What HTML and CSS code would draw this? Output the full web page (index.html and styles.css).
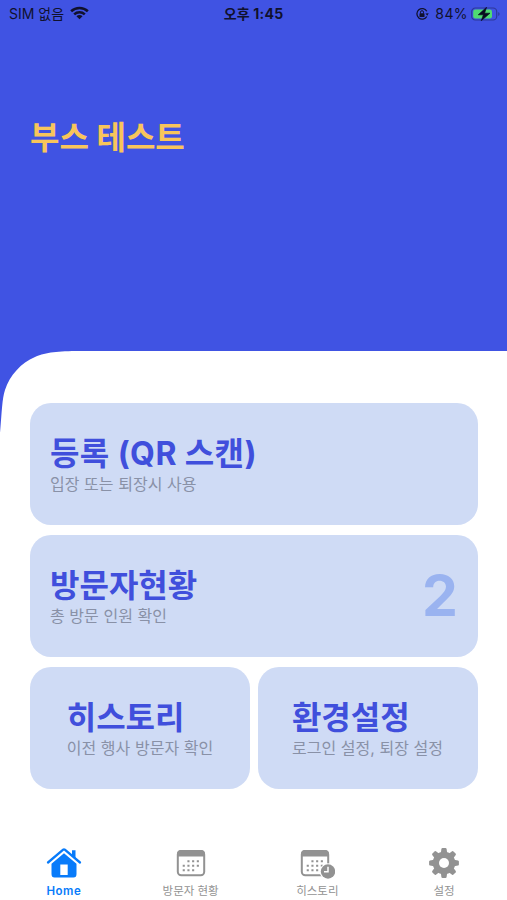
FILE: index.html
```html
<!DOCTYPE html>
<html lang="ko">
<head>
<meta charset="utf-8">
<meta name="viewport" content="width=device-width, initial-scale=1">
<title>부스 테스트</title>
<link rel="stylesheet" href="styles.css">
</head>
<body>
<div class="app">
  <header class="hero">
    <div class="status">
      <div class="status-left">
        <span class="carrier">SIM 없음</span>
        <svg class="wifi" viewBox="0 0 20 14" width="19" height="14" fill="none" stroke="#10112d" stroke-width="2.7"><path d="M1.2 5.2C6.2.5 13.8.5 18.8 5.2"/><path d="M4.4 8.5c3.2-3 8-3 11.2 0"/><path d="M10 13.6 6.8 10.5c1.8-1.7 4.6-1.7 6.4 0z" fill="#10112d" stroke="none"/></svg>
      </div>
      <span class="time">오후 1:45</span>
      <div class="status-right">
        <svg class="lock" viewBox="0 0 14 14" width="14" height="14" fill="none" stroke="#10112d"><path d="M11.8 4.2A5.3 5.3 0 1 0 11.8 9.5" stroke-width="1.3"/><path d="m10.4 6.4 3.3-.2-1.4 2.6z" fill="#10112d" stroke="none"/><rect x="4.5" y="6.3" width="5" height="3.7" rx=".6" fill="#10112d" stroke="none"/><path d="M5.5 6.5V5.2a1.5 1.5 0 0 1 3 0v1.3"/></svg>
        <span class="percent">84%</span>
        <svg class="battery" viewBox="0 0 30 14" width="30" height="14"><rect x=".7" y="1" width="25" height="12" rx="3.6" fill="none" stroke="#2d3899" stroke-width="1.2"/><path d="M27.2 5v4c1.9-.6 1.9-3.4 0-4z" fill="#2d3899"/><rect x="2.2" y="2.5" width="18.8" height="9" rx="2.2" fill="#4fda72"/><path d="M15.6.2 7.2 7.8h5.2l-2.2 6 8.8-7.6h-5.4z" fill="#090b20" stroke="#090b20" stroke-width=".6"/></svg>
      </div>
    </div>
    <h1 class="booth">부스 테스트</h1>
  </header>
  <main class="panel">
    <svg class="corner" viewBox="0 0 80 82" width="80" height="82"><path d="M0 0H80C57 .2 47 1 35 6 21 12 10 24 5 39 2 48 2 60 0 82z" fill="#4053e3"/></svg>
    <section class="card">
      <div class="copy"><h2 class="register">등록 (QR 스캔)</h2><p>입장 또는 퇴장시 사용</p></div>
    </section>
    <section class="card">
      <div class="copy"><h2>방문자현황</h2><p>총 방문 인원 확인</p></div>
      <strong class="count">2</strong>
    </section>
    <div class="pair">
      <section class="card small"><div class="copy"><h2>히스토리</h2><p>이전 행사 방문자 확인</p></div></section>
      <section class="card small settings"><div class="copy"><h2>환경설정</h2><p>로그인 설정, 퇴장 설정</p></div></section>
    </div>
  </main>
  <nav class="tabs">
    <a class="tab active">
      <svg viewBox="0 0 36 32" width="36" height="32"><path d="M2 15.5 17.2 2.7q.8-.7 1.6 0L34 15.5" fill="none" stroke="#087bfa" stroke-width="2.3" stroke-linecap="round" stroke-linejoin="round"/><path d="M26 3.2h3.5v9L26 9z" fill="#087bfa"/><path fill-rule="evenodd" d="M18 6.2 30.5 16.8V27q0 3.5-3 3.5h-19q-3 0-3-3.5V16.8zM14.3 17.5V28h7.400V17.5z" fill="#087bfa"/></svg>
      <span>Home</span>
    </a>
    <a class="tab">
      <svg viewBox="0 0 36 32" width="36" height="32"><g id="calendar"><rect x="4.8" y="4" width="26.4" height="24.3" rx="3.5" fill="none" stroke="#929292" stroke-width="2"/><path d="M4 9.500V7q0-4 4-4h20q4 0 4 4v2.500z" fill="#929292"/><g fill="none" stroke="#929292" stroke-width="2.1" stroke-dasharray="2.1 2.6"><path d="M14.4 14.200h11.8M9.700 18.700h16.500M9.700 23.200h11.800"/></g></g></svg>
      <span>방문자 현황</span>
    </a>
    <a class="tab">
      <svg viewBox="0 0 36 32" width="36" height="32"><use href="#calendar" x="-2"/><circle cx="29" cy="24.500" r="8.300" fill="#fff"/><circle cx="29" cy="24.500" r="7.200" fill="#929292"/><path d="M29 19.800v4.900h-4" fill="none" stroke="#fff" stroke-width="1.500"/></svg>
      <span>히스토리</span>
    </a>
    <a class="tab">
      <svg viewBox="0 0 36 32" width="36" height="32"><g fill="#929292" transform="translate(18 16)"><g id="teeth"><path id="tooth" d="M-3.200-10-2.600-14q.2-.9 1.100-.9h3q.9 0 1.100.9l.6 4v20l-.6 4q-.2.900-1.100.900h-3q-.9 0-1.100-.900l-.6-4z"/><use href="#tooth" transform="rotate(90)"/></g><use href="#teeth" transform="rotate(45)"/><circle r="11.300"/><circle r="5" fill="#fff"/></g></svg>
      <span>설정</span>
    </a>
  </nav>
</div>
</body>
</html>
```
FILE: styles.css
```css
* { box-sizing: border-box; }
body { margin: 0; background: #fff; font-family: Inter, "Noto Sans CJK KR", sans-serif; }
h1, h2, p { margin: 0; white-space: nowrap; }
.app { width: 507px; height: 900px; display: flex; flex-direction: column; overflow: hidden; }
.hero { height: 351px; flex: none; background: #4053e3; }
.status { height: 28px; display: grid; grid-template-columns: 1fr auto 1fr; align-items: center; padding: 0 6px 0 9px; color: #10112d; font-size: 14px; line-height: 20px; }
.status-left, .status-right { display: flex; align-items: center; }
.status-left { gap: 6px; }
.wifi { margin-top: -2px; }
.status-right { justify-content: flex-end; }
.percent { margin: 0 3px 0 6px; letter-spacing: 0.4px; }
.time { margin-left: -3px; font-weight: 700; letter-spacing: 0.2px; }
.booth { margin: 86px 0 0 30px; height: 48px; color: #f8c55b; font-size: 32px; line-height: 48px; font-weight: 700; }
.panel { position: relative; height: 480px; flex: none; padding: 52px 29px 0 30px; display: flex; flex-direction: column; gap: 10px; }
.corner { position: absolute; left: 0; top: 0; }
.card { height: 122px; flex: none; display: flex; align-items: center; justify-content: space-between; padding: 2px 20px 0; border-radius: 21px; background: #cfdbf5; }
.card h2 { color: #404fdc; font-size: 32px; line-height: 38px; font-weight: 700; }
.card .register { letter-spacing: 0.4px; }
.card p { color: #8991a7; font-size: 16px; line-height: 23px; letter-spacing: 0.05px; }
.count { margin-bottom: 3px; color: #9ab3f0; font-size: 57px; line-height: 60px; font-weight: 700; }
.pair { display: grid; grid-template-columns: 220px 220px; gap: 8px; }
.card.small { justify-content: center; padding: 2px 0 0; }
.card.settings { padding-right: 1px; }
.tabs { height: 69px; display: grid; grid-template-columns: repeat(4, 1fr); padding-top: 16px; }
.tab { display: flex; flex-direction: column; align-items: center; padding-left: 1px; color: #929292; font-size: 11.5px; line-height: 24px; }
.active { color: #087bfa; font-weight: 600; letter-spacing: 0.5px; }
```
